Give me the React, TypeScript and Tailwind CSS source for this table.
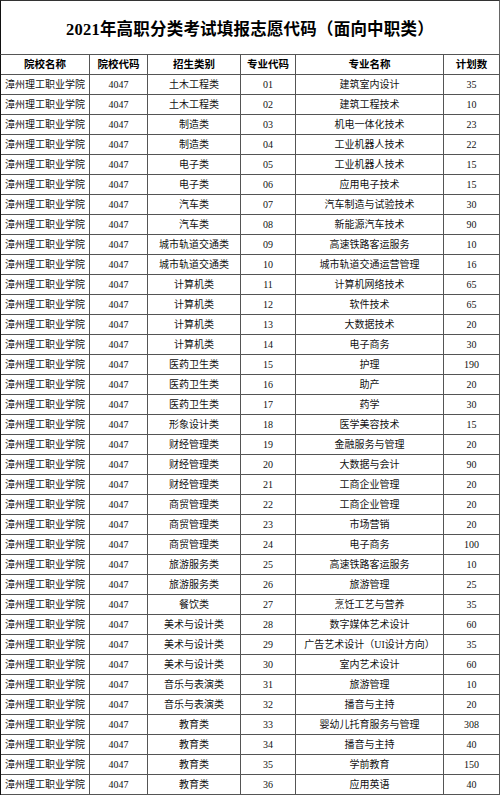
const rows: [string, string, string, string][] = [
  ["土木工程类", "01", "建筑室内设计", "35"],
  ["土木工程类", "02", "建筑工程技术", "10"],
  ["制造类", "03", "机电一体化技术", "23"],
  ["制造类", "04", "工业机器人技术", "22"],
  ["电子类", "05", "工业机器人技术", "15"],
  ["电子类", "06", "应用电子技术", "15"],
  ["汽车类", "07", "汽车制造与试验技术", "30"],
  ["汽车类", "08", "新能源汽车技术", "90"],
  ["城市轨道交通类", "09", "高速铁路客运服务", "10"],
  ["城市轨道交通类", "10", "城市轨道交通运营管理", "16"],
  ["计算机类", "11", "计算机网络技术", "65"],
  ["计算机类", "12", "软件技术", "65"],
  ["计算机类", "13", "大数据技术", "20"],
  ["计算机类", "14", "电子商务", "30"],
  ["医药卫生类", "15", "护理", "190"],
  ["医药卫生类", "16", "助产", "20"],
  ["医药卫生类", "17", "药学", "30"],
  ["形象设计类", "18", "医学美容技术", "15"],
  ["财经管理类", "19", "金融服务与管理", "20"],
  ["财经管理类", "20", "大数据与会计", "90"],
  ["财经管理类", "21", "工商企业管理", "20"],
  ["商贸管理类", "22", "工商企业管理", "20"],
  ["商贸管理类", "23", "市场营销", "20"],
  ["商贸管理类", "24", "电子商务", "100"],
  ["旅游服务类", "25", "高速铁路客运服务", "10"],
  ["旅游服务类", "26", "旅游管理", "25"],
  ["餐饮类", "27", "烹饪工艺与营养", "35"],
  ["美术与设计类", "28", "数字媒体艺术设计", "60"],
  ["美术与设计类", "29", "广告艺术设计（UI设计方向）", "35"],
  ["美术与设计类", "30", "室内艺术设计", "60"],
  ["音乐与表演类", "31", "旅游管理", "10"],
  ["音乐与表演类", "32", "播音与主持", "20"],
  ["教育类", "33", "婴幼儿托育服务与管理", "308"],
  ["教育类", "34", "播音与主持", "40"],
  ["教育类", "35", "学前教育", "150"],
  ["教育类", "36", "应用英语", "40"],
];

const headers = ["院校名称", "院校代码", "招生类别", "专业代码", "专业名称", "计划数"];

const cell =
  "flex h-[20px] items-center justify-center border-r border-b border-[#555] whitespace-nowrap";

export default function App() {
  return (
    <div className="h-[796px] w-[500px] bg-white font-['Liberation_Serif','Noto_Sans_CJK_SC',serif] text-[#111]">
      <div className="flex h-[55px] items-center justify-center border-t border-r border-b border-l border-t-[#333] border-r-[#666] border-b-[#555] border-l-[#111] pt-[5px] text-[16.5px] font-bold tracking-[0.2px] text-black">
        2021年高职分类考试填报志愿代码（面向中职类）
      </div>
      <div className="grid grid-cols-[89px_58px_93px_55px_148px_56px] border-l border-l-[#111]">
        {headers.map((h) => (
          <div key={h} className={cell + " text-[10.5px] font-bold text-black"}>
            {h}
          </div>
        ))}
        {rows.map((r, i) => (
          <div key={i} className="contents text-[10px]">
            <div className={cell}>漳州理工职业学院</div>
            <div className={cell}>4047</div>
            <div className={cell}>{r[0]}</div>
            <div className={cell}>{r[1]}</div>
            <div className={cell}>{r[2]}</div>
            <div className={cell}>{r[3]}</div>
          </div>
        ))}
      </div>
    </div>
  );
}
